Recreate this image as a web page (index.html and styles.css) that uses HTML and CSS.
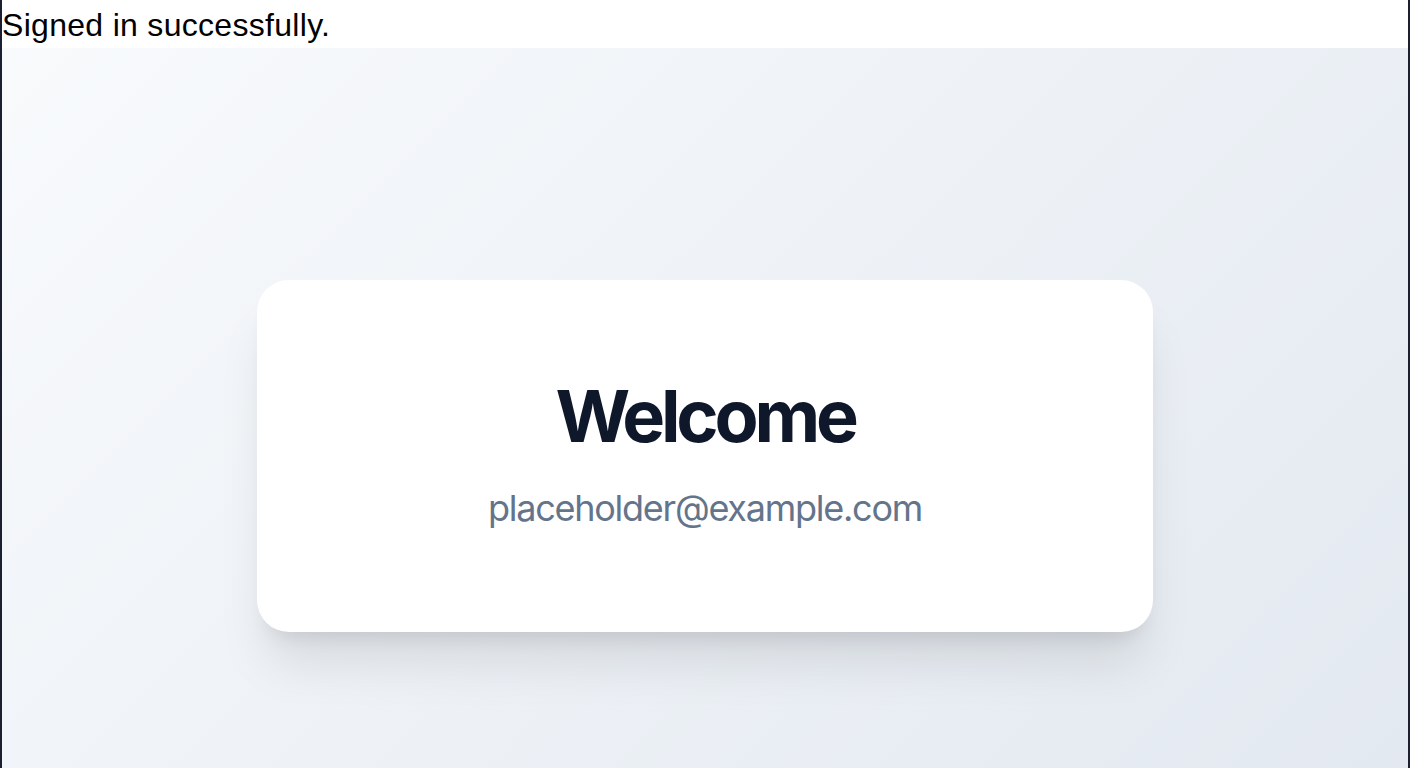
FILE: index.html
```html
<!DOCTYPE html>
<html lang="en">
<head>
<meta charset="utf-8">
<title>Welcome</title>
<link rel="stylesheet" href="styles.css">
</head>
<body>
<div class="frame">
  <div class="status">Signed in successfully.</div>
  <main class="stage">
    <section class="card">
      <h1 class="title">Welcome</h1>
      <p class="email">placeholder@example.com</p>
    </section>
  </main>
</div>
</body>
</html>
```
FILE: styles.css
```css
html, body {
  margin: 0;
  padding: 0;
  background: #ffffff;
}

.frame {
  border-left: 2px solid #1b2030;
  border-right: 2px solid #1b2030;
  min-height: 100vh;
}

.status {
  height: 48px;
  line-height: 50px;
  font-family: "Liberation Sans", Arial, sans-serif;
  font-size: 32px;
  letter-spacing: 0.3px;
  color: #000000;
  background: #ffffff;
  white-space: nowrap;
}

.stage {
  min-height: 768px;
  padding: 24px;
  display: flex;
  align-items: center;
  justify-content: center;
  background: linear-gradient(135deg, #f8fafc 0%, #e2e8f0 100%);
}

.card {
  width: 896px;
  box-sizing: border-box;
  padding: 96px;
  background: #ffffff;
  border-radius: 32px;
  box-shadow: 0 40px 50px -10px rgba(0, 0, 0, 0.1), 0 16px 20px -12px rgba(0, 0, 0, 0.1);
  text-align: center;
  font-family: Inter, "Noto Sans", sans-serif;
}

.title {
  margin: 0;
  font-size: 72px;
  line-height: 80px;
  font-weight: 700;
  color: #0f172a;
  letter-spacing: -4.2px;
}

.email {
  margin: 24px 0 0;
  font-size: 36px;
  line-height: 56px;
  color: #64748b;
  letter-spacing: -1.25px;
}
```
